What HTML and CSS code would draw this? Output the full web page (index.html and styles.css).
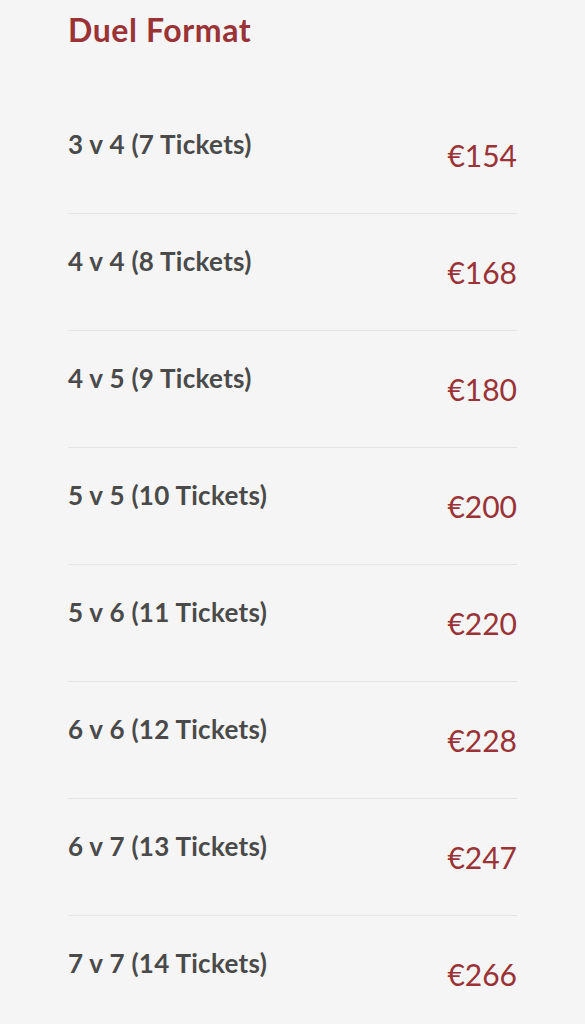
FILE: index.html
```html
<!DOCTYPE html>
<html lang="en">
<head>
<meta charset="utf-8">
<link rel="stylesheet" href="styles.css">
</head>
<body>
<main class="menu">
  <h2 class="menu-title">Duel Format</h2>
  <ul class="price-list">
    <li class="price-row"><span class="label">3 v 4 (7 Tickets)</span><span class="price">€154</span></li>
    <li class="price-row"><span class="label">4 v 4 (8 Tickets)</span><span class="price">€168</span></li>
    <li class="price-row"><span class="label">4 v 5 (9 Tickets)</span><span class="price">€180</span></li>
    <li class="price-row"><span class="label">5 v 5 (10 Tickets)</span><span class="price">€200</span></li>
    <li class="price-row"><span class="label">5 v 6 (11 Tickets)</span><span class="price">€220</span></li>
    <li class="price-row"><span class="label">6 v 6 (12 Tickets)</span><span class="price">€228</span></li>
    <li class="price-row"><span class="label">6 v 7 (13 Tickets)</span><span class="price">€247</span></li>
    <li class="price-row"><span class="label">7 v 7 (14 Tickets)</span><span class="price">€266</span></li>
  </ul>
</main>
</body>
</html>
```
FILE: styles.css
```css
html, body {
  margin: 0;
  padding: 0;
  background: #f5f5f5;
}
body {
  font-family: Lato, "Liberation Sans", sans-serif;
}
.menu {
  padding: 0 68px;
}
.menu-title {
  margin: 0;
  padding-top: 11px;
  font-size: 32px;
  line-height: 38px;
  font-weight: 700;
  letter-spacing: 0.6px;
  color: #9a3236;
}
.price-list {
  list-style: none;
  margin: 48px 0 0;
  padding: 0;
}
.price-row {
  display: flex;
  justify-content: space-between;
  align-items: flex-start;
  box-sizing: border-box;
  height: 117px;
  padding-top: 31px;
  border-bottom: 1px solid #e4e4e4;
}
.price-row:last-child {
  border-bottom: none;
}
.label {
  font-size: 26px;
  line-height: 32px;
  font-weight: 700;
  letter-spacing: 0.3px;
  color: #4a4a4a;
}
.price {
  font-size: 30px;
  line-height: 36px;
  margin-top: 9px;
  color: #9a3236;
}
```
